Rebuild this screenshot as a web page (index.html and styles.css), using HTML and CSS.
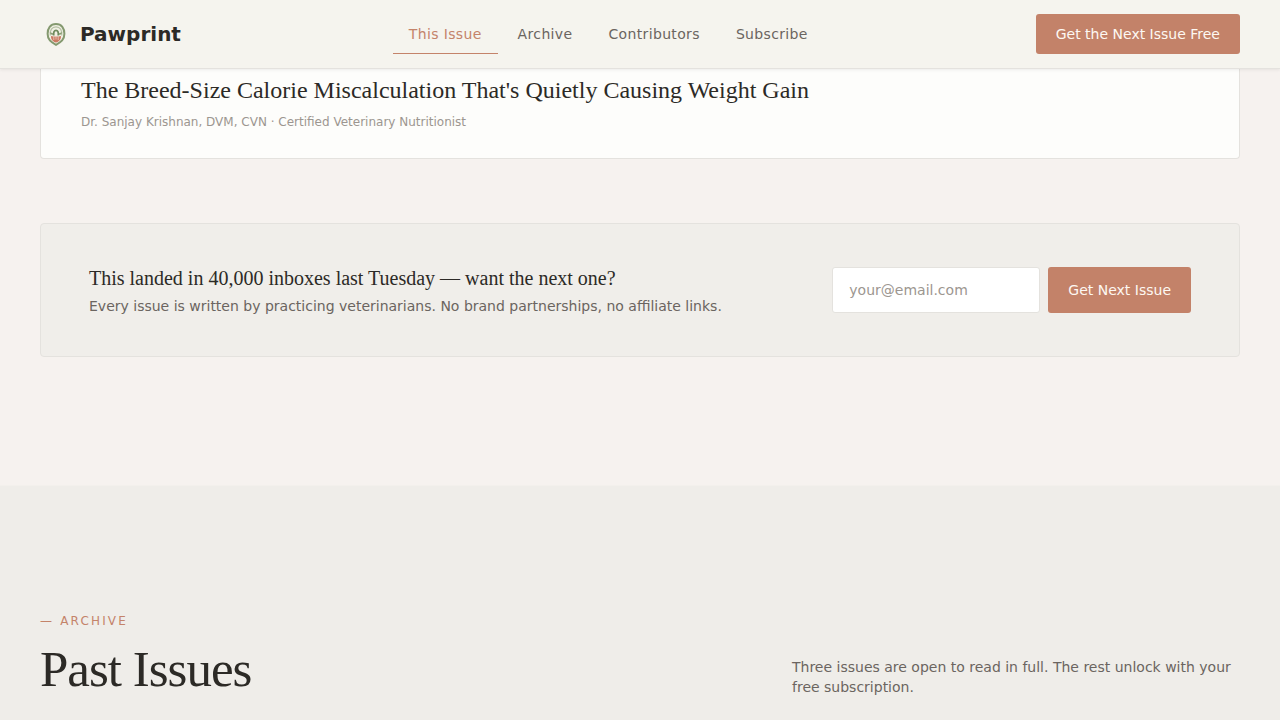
FILE: index.html
```html
<!DOCTYPE html>
<html lang="en">
<head>
    <meta charset="UTF-8">
    <meta name="viewport" content="width=device-width, initial-scale=1.0">
    <title>Pawprint</title>
    <link rel="stylesheet" href="styles.css">
</head>
<body>
    <header class="site-header">
        <a href="#" class="brand">
            <svg class="brand-logo" viewBox="0 0 32 32" aria-hidden="true">
                <path d="M16 6C10.300 6 7.600 10.300 7.600 15.800C7.600 21.500 10.800 24 16 26.800C21.200 24 24.400 21.500 24.400 15.800C24.400 10.300 21.700 6 16 6Z" fill="#f1f0e4" stroke="#84996f" stroke-width="2"/>
                <path d="M10.300 17.500C9.600 12 12 8.800 16 8.800S22.400 12 21.700 17.500" fill="none" stroke="#b4c0a3" stroke-width="1.200"/>
                <path d="M10.500 14.500C11.300 16.300 12.600 16.300 13.500 15.500" fill="none" stroke="#84996f" stroke-width="1.400"/>
                <path d="M21.500 14.500C20.700 16.300 19.400 16.300 18.500 15.500" fill="none" stroke="#84996f" stroke-width="1.400"/>
                <path d="M13.700 17.500C13.300 14 14.300 12.300 16 12.300S18.700 14 18.300 17.500" fill="none" stroke="#6f8a5b" stroke-width="1.800"/>
                <path d="M11 18L13.500 18.500H18.500L21 18C21.200 21.500 19 23.800 16 24.600C13 23.800 10.800 21.500 11 18Z" fill="#cb7a62"/>
                <path d="M13.800 18.500V22M16 17.500V21.500M18.200 18.500V22" stroke="#f1ddd0" stroke-width="0.700"/>
            </svg>
            <span>Pawprint</span>
        </a>
        <nav class="main-nav">
            <a href="#issue" class="active">This Issue</a>
            <a href="#archive">Archive</a>
            <a href="#contributors">Contributors</a>
            <a href="#subscribe">Subscribe</a>
        </nav>
        <button type="button" class="btn btn-small">Get the Next Issue Free</button>
    </header>

    <main>
        <section class="issue" id="issue">
            <article class="article-card">
                <h3>The Breed-Size Calorie Miscalculation That's Quietly Causing Weight Gain</h3>
                <p>Dr. Sanjay Krishnan, DVM, CVN · Certified Veterinary Nutritionist</p>
            </article>

            <div class="signup" id="subscribe">
                <div class="signup-text">
                    <h3>This landed in 40,000 inboxes last Tuesday — want the next one?</h3>
                    <p>Every issue is written by practicing veterinarians. No brand partnerships, no affiliate links.</p>
                </div>
                <form class="signup-form">
                    <input type="email" placeholder="your@email.com" aria-label="Email address" required>
                    <button type="submit" class="btn">Get Next Issue</button>
                </form>
            </div>
        </section>

        <section class="archive" id="archive">
            <p class="eyebrow">— Archive</p>
            <div class="archive-head">
                <h2>Past Issues</h2>
                <p>Three issues are open to read in full. The rest unlock with your free subscription.</p>
            </div>
        </section>
    </main>
</body>
</html>
```

FILE: styles.css
```css
* {
    box-sizing: border-box;
}
body {
    font-family: "DejaVu Sans", sans-serif;
    font-size: 14px;
    line-height: 20px;
    background-color: #f6f2ef;
    color: #2c2a26;
    margin: 0;
    min-height: 100vh;
    display: flex;
    flex-direction: column;
}
h2, h3, p {
    margin: 0;
}
h2, h3 {
    font-family: "Liberation Serif", serif;
    font-weight: 400;
}
main {
    flex: 1;
    display: flex;
    flex-direction: column;
}

/* Header */
.site-header {
    position: sticky;
    top: 0;
    z-index: 10;
    display: flex;
    align-items: center;
    justify-content: space-between;
    padding: 14px 40px;
    background-color: #f5f4ee;
    border-bottom: 1px solid #e4e2de;
    box-shadow: 0 1px 3px rgba(44, 42, 38, 0.08);
}
.brand {
    display: flex;
    align-items: center;
    gap: 8px;
    font-size: 20px;
    font-weight: 700;
    color: #2c2a26;
    text-decoration: none;
}
.brand-logo {
    width: 32px;
    height: 32px;
}
.main-nav {
    display: flex;
    gap: 4px;
}
.main-nav a {
    padding: 9px 16px;
    color: #6b6560;
    letter-spacing: 0.025em;
    text-decoration: none;
    border-bottom: 1px solid transparent;
}
.main-nav a.active {
    color: #c4836a;
    border-bottom-color: #c4836a;
}
.btn {
    padding: 0 20px;
    font-family: inherit;
    font-size: 14px;
    color: #fdf8f2;
    background-color: #c38269;
    border: none;
    border-radius: 3px;
    cursor: pointer;
}
.btn:hover {
    background-color: #b3735b;
}
.btn-small {
    height: 40px;
}

/* This issue */
.issue {
    padding: 0 40px 128px;
}
.article-card {
    padding: 5px 40px 28px;
    background-color: #fdfdfb;
    border: 1px solid #e4e2de;
    border-top: none;
    border-radius: 0 0 4px 4px;
}
.article-card h3 {
    font-size: 24px;
    line-height: 32px;
}
.article-card p {
    margin-top: 8px;
    font-size: 12px;
    line-height: 16px;
    color: #9c9690;
}
.signup {
    display: flex;
    align-items: center;
    justify-content: space-between;
    gap: 32px;
    margin-top: 64px;
    padding: 40px 48px;
    background-color: #f0eeea;
    border: 1px solid #e4e2de;
    border-radius: 4px;
}
.signup h3 {
    font-size: 20px;
    line-height: 28px;
}
.signup p {
    margin-top: 4px;
    color: #6b6560;
}
.signup-form {
    display: flex;
    gap: 8px;
    height: 46px;
}
.signup-form input {
    width: 208px;
    padding: 0 16px;
    font-family: inherit;
    font-size: 14px;
    color: #2c2a26;
    background-color: #ffffff;
    border: 1px solid #e4e2de;
    border-radius: 3px;
}
.signup-form input::placeholder {
    color: #9c9690;
}

/* Archive */
.archive {
    flex: 1;
    padding: 128px 40px 16px;
    background-color: #efede9;
    border-top: 1px solid #f3f0ec;
}
.eyebrow {
    font-size: 12px;
    line-height: 14px;
    letter-spacing: 0.18em;
    text-transform: uppercase;
    color: #c4836a;
}
.archive-head {
    display: flex;
    align-items: flex-end;
    justify-content: space-between;
    margin-top: 13px;
}
.archive-head h2 {
    font-size: 51px;
    line-height: 56px;
    letter-spacing: -1px;
}
.archive-head p {
    max-width: 448px;
    color: #6b6560;
}
```
